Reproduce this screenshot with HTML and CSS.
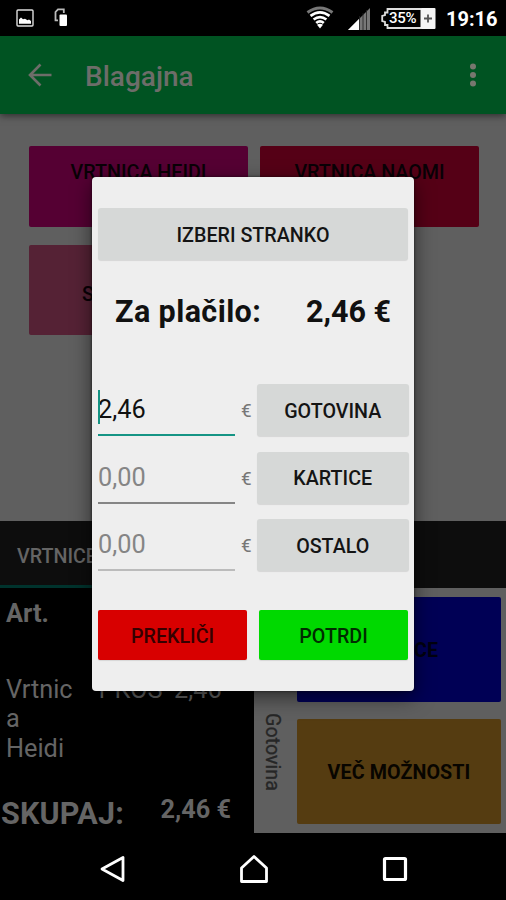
FILE: index.html
```html
<!DOCTYPE html>
<html lang="sl">
<head>
<meta charset="utf-8">
<title>Blagajna</title>
<link rel="stylesheet" href="styles.css">
</head>
<body>
<header class="status">
  <svg class="status-photo" width="18" height="18" viewBox="0 0 18 18"><rect x="1" y="1" width="16" height="16" rx="1" fill="none" stroke="#ddd" stroke-width="1.4"/><path d="M3 14.800v-4.300l2-2 2 1.700 2-.5 2.500 1.500 1.500-.8 2 1.500v2.900z" fill="#fff"/></svg>
  <svg class="status-copy" width="14" height="19" viewBox="0 0 14 19"><path d="M4 12.300H1.500V4L4 1.300H9.800V5" fill="none" stroke="#bbb" stroke-width="1.800"/><rect x="5.500" y="6.500" width="7.500" height="11.500" rx="1" fill="#fff"/></svg>
  <div class="status-right">
    <svg width="28" height="24" viewBox="0 0 28 24"><path d="M1.500 6.500Q14-2.500 26.500 6.500" fill="none" stroke="#777" stroke-width="3"/><path d="M4.500 9.800Q14 2.800 23.500 9.800M7.600 13.500Q14 8.600 20.400 13.500M10.200 17Q14 13.800 17.800 17" fill="none" stroke="#fff" stroke-width="2.700"/><path d="M11 18.800Q14 16.500 17 18.800L14 22.500z" fill="#fff"/></svg>
    <svg class="signal" width="22" height="22" viewBox="0 0 22 22"><path d="M0 22L22 0V22z" fill="#777"/><path d="M0 22L11 11V22z" fill="#fff"/><path d="M11.500 8v14M15 5v17M18.500 2v20" stroke="#222" stroke-width=".8"/></svg>
    <div class="battery">
      <svg width="55" height="21" viewBox="0 0 55 21"><path d="M40 1H6.500V4.500H4V7L1.200 8V13L4 14V17H6.500V20H40" fill="none" stroke="#ddd" stroke-width="1.800"/><rect x="39.500" width="15" height="21" rx="1" fill="#f5f5f5"/><path d="M47 6.500v8M43 10.500h8" stroke="#555" stroke-width="1.800"/></svg>
      <span>35%</span>
    </div>
    <time>19:16</time>
  </div>
</header>
<div class="appbar">
  <svg width="24" height="24" viewBox="0 0 24 24"><path d="M23.500 12H2M12.500 1.500L2 12l10.500 10.500" fill="none" stroke="#6d6d69" stroke-width="2.600"/></svg>
  <h1>Blagajna</h1>
  <svg class="more" width="8" height="24" viewBox="0 0 8 24" fill="#77776f"><circle cx="4" cy="3.500" r="3"/><circle cx="4" cy="12" r="3"/><circle cx="4" cy="20.500" r="3"/></svg>
</div>
<main class="products">
  <div class="product heidi">VRTNICA HEIDI</div>
  <div class="product naomi">VRTNICA NAOMI</div>
  <div class="product pink">S</div>
</main>
<nav class="tabs"><span class="tab">VRTNICE</span></nav>
<section class="bottom">
  <div class="receipt">
    <div class="receipt-head">Art.</div>
    <div class="receipt-row"><span>Vrtnic<br>a<br>Heidi</span><span>1 KOS</span><span>2,46</span></div>
    <div class="receipt-total"><span class="total-label">SKUPAJ:</span><span>2,46 €</span></div>
  </div>
  <aside class="method">Gotovina</aside>
  <div class="actions">
    <div class="action navy">CE</div>
    <div class="action gold">VEČ MOŽNOSTI</div>
  </div>
</section>
<footer class="navbar">
  <svg width="27" height="30" viewBox="0 0 27 30"><path d="M24 3.500V26.500L3 15z" fill="none" stroke="#fff" stroke-width="2.800" stroke-linejoin="round"/></svg>
  <svg width="30" height="30" viewBox="0 0 30 30"><path d="M15 2.500L27.500 14V27.500H2.500V14z" fill="none" stroke="#fff" stroke-width="2.800" stroke-linejoin="round"/></svg>
  <svg width="26" height="26" viewBox="0 0 26 26"><rect x="2.500" y="2.500" width="21" height="21" rx="1" fill="none" stroke="#fff" stroke-width="3.200"/></svg>
</footer>
<div class="dialog">
  <button class="btn">IZBERI STRANKO</button>
  <div class="due"><span class="due-label">Za plačilo:</span><span>2,46 €</span></div>
  <div class="pay">
    <div class="field active">2,46</div><span class="euro">€</span><button class="btn">GOTOVINA</button>
    <div class="field">0,00</div><span class="euro">€</span><button class="btn">KARTICE</button>
    <div class="field last">0,00</div><span class="euro">€</span><button class="btn">OSTALO</button>
  </div>
  <div class="confirm"><button class="btn cancel">PREKLIČI</button><button class="btn ok">POTRDI</button></div>
</div>
</body>
</html>
```
FILE: styles.css
```css
* { box-sizing: border-box; }
body {
  margin: 0;
  width: 506px;
  height: 900px;
  overflow: hidden;
  position: relative;
  display: flex;
  flex-direction: column;
  background: #000;
  font-family: Roboto, sans-serif;
  font-size: 19.700px;
}
svg { display: block; flex: none; }
.status { height: 36px; flex: none; display: flex; align-items: center; padding: 0 10px 0 16px; color: #fff; }
.status-copy { margin-left: 20px; margin-top: -2px; }
.status-right { margin-left: auto; display: flex; align-items: center; height: 36px; }
.signal { margin-left: 14px; margin-top: 2px; }
.battery { position: relative; margin-left: 11px; }
.battery span { position: absolute; left: 8px; top: 2px; font-size: 15px; line-height: 17px; font-weight: 500; letter-spacing: -.3px; }
.status time { margin-left: 10px; padding-top: 2px; font-size: 20px; font-weight: 700; width: 50px; white-space: nowrap; }
.appbar { height: 78px; flex: none; background: #005322; display: flex; align-items: center; padding: 0 29px 0 28px; box-shadow: 0 2px 7px rgba(0,0,0,.5); z-index: 1; }
.appbar h1 { margin: 3px 0 0 33px; font-size: 28px; font-weight: 500; color: #6d6d69; }
.more { margin-left: auto; }
.products { height: 406.500px; flex: none; background: #5f5f5f; padding: 32px 27px 0 29px; display: grid; grid-template-columns: 219px 219px; grid-template-rows: 81px 90px; column-gap: 12px; row-gap: 18px; align-content: start; }
.product { border-radius: 2px; font-weight: 500; color: #090006; text-align: center; padding-top: 15px; line-height: 24px; }
.heidi { background: #550033; }
.naomi { background: #550016; }
.pink { background: #552235; padding: 38px 0 0 53px; text-align: left; }
.tabs { height: 67.500px; flex: none; background: #0d0d0d; }
.tab { display: block; width: 126px; height: 67px; padding: 24px 0 0 17px; line-height: 24px; font-weight: 500; color: #656565; border-bottom: 3px solid #00332d; }
.bottom { height: 245px; flex: none; display: flex; background: #5f5f5f; }
.receipt { width: 254px; background: #000; color: #656565; font-size: 25.300px; line-height: 29.500px; padding-top: 11px; }
.receipt-head { font-weight: 700; padding-left: 6px; }
.receipt-row { display: grid; grid-template-columns: 88px 80px 70px; padding-left: 6px; margin-top: 46px; }
.receipt-total { display: flex; justify-content: space-between; margin-top: 32px; padding-right: 23px; font-weight: 700; }
.total-label { font-size: 30.500px; letter-spacing: .2px; margin: 4px 0 0 1px; }
.method { width: 43px; writing-mode: vertical-rl; padding: 125px 10px 0 0; line-height: 30px; color: #262626; -webkit-text-stroke: .3px #262626; }
.actions { display: flex; flex-direction: column; gap: 17px; padding: 9px 5px 0 0; }
.action { width: 204px; height: 105px; border-radius: 2px; font-weight: 700; color: #080500; display: flex; align-items: center; justify-content: center; padding-top: 2px; }
.navy { background: #000055; color: #000010; justify-content: flex-end; padding-right: 63px; }
.gold { background: #553c11; letter-spacing: .08px; }
.navbar { height: 67px; flex: none; display: grid; grid-template-columns: repeat(3, 141px); justify-items: center; align-items: center; padding: 5px 0 0 42px; }
.dialog { position: absolute; z-index: 2; left: 92px; top: 177px; width: 322px; height: 514px; border-radius: 4px; background: #eee; padding: 31px 6px 0 6px; display: flex; flex-direction: column; box-shadow: 0 6px 20px rgba(0,0,0,.55), 0 0 3px rgba(0,0,0,.6); }
.btn { border: 0; margin: 0; padding: 2px 0 0; height: 52px; border-radius: 3px; background: #d6d8d7; box-shadow: 0 1px 1px rgba(0,0,0,.1); color: #141414; font: 500 19.700px Roboto, sans-serif; }
.due { display: flex; justify-content: space-between; padding: 0 17px 0 17px; margin-top: 34px; font-size: 30.500px; line-height: 36px; font-weight: 700; color: #111; }
.due-label { letter-spacing: .4px; }
.pay { display: grid; grid-template-columns: 137px 22px 151.500px; row-gap: 15.500px; margin-top: 54px; }
.field { height: 52px; border-bottom: 2px solid #858585; font-size: 25.300px; line-height: 30px; padding-top: 11px; color: #858585; position: relative; }
.field.active { color: #111; border-color: #159484; }
.field.active::before { content: ""; position: absolute; left: 0; top: 6px; width: 2px; height: 34px; background: #159484; }
.field.last { border-color: #bbb; }
.euro { color: #777; line-height: 54px; padding-left: 6px; height: 52px; font-size: 19px; }
.confirm { display: flex; gap: 12px; margin-top: 39px; }
.confirm .btn { width: 149px; height: 50px; border-radius: 2px; }
.cancel { background: #d80000; color: #350000; }
.ok { background: #00d900; color: #002c00; }
```
